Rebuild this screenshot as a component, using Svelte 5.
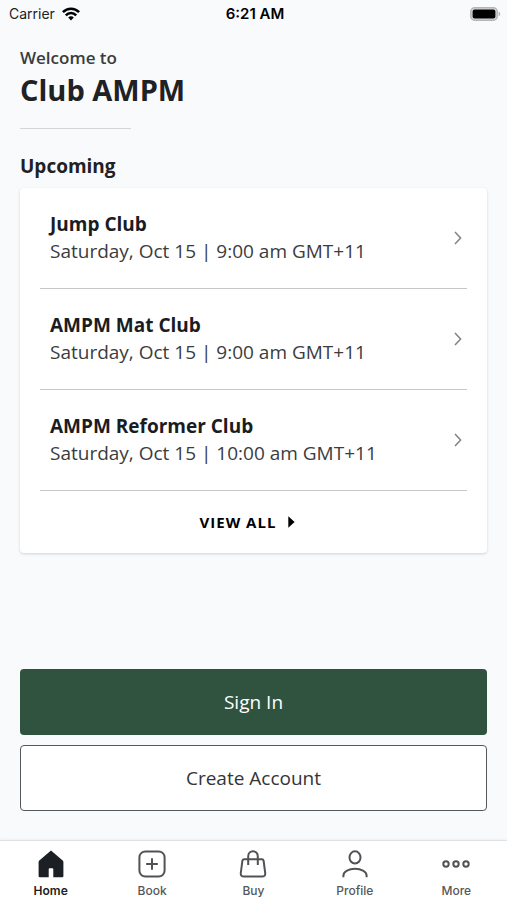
<script>
  const classes = [
    { name: 'Jump Club', time: 'Saturday, Oct 15 | 9:00 am GMT+11' },
    { name: 'AMPM Mat Club', time: 'Saturday, Oct 15 | 9:00 am GMT+11' },
    { name: 'AMPM Reformer Club', time: 'Saturday, Oct 15 | 10:00 am GMT+11' }
  ];
  const tabs = ['Home', 'Book', 'Buy', 'Profile', 'More'];
  let active = $state('Home');
</script>

<div class="app">
  <div class="status">
    <div class="carrier">
      <span>Carrier</span>
      <svg width="18" height="14" viewBox="0 0 18 14" aria-hidden="true">
        <g fill="none" stroke="#000" stroke-width="2.6">
          <path d="M0.9 5.2C5.4 0.5 12.6 0.5 17.1 5.2" />
          <path d="M3.8 8.3C6.8 5.2 11.2 5.2 14.2 8.3" />
        </g>
        <path d="M6.2 10.5C7.8 8.9 10.2 8.9 11.8 10.5L9 13.4Z" />
      </svg>
    </div>
    <span class="clock">6:21 AM</span>
    <svg class="battery" width="31" height="14" viewBox="0 0 31 14" aria-hidden="true">
      <rect x="0.8" y="0.8" width="26.4" height="12.4" rx="3.8" fill="#d8d9da" stroke="#b4b5b7" stroke-width="1.5" />
      <rect x="2.6" y="2.6" width="22.8" height="8.8" rx="2" />
      <path d="M28.6 4.8C30.8 5.4 30.8 8.6 28.6 9.2Z" fill="#b4b5b7" />
    </svg>
  </div>

  <main>
    <header>
      <p>Welcome to</p>
      <h1>Club AMPM</h1>
    </header>

    <section>
      <h2>Upcoming</h2>
      <div class="card">
        <ul>
          {#each classes as item}
            <li>
              <a href="#class">
                <span class="info">
                  <strong>{item.name}</strong>
                  <span>{item.time}</span>
                </span>
                <svg width="8" height="14" viewBox="0 0 8 14" aria-hidden="true">
                  <path d="M1 1L6.6 7L1 13" fill="none" stroke="#808284" stroke-width="1.5" />
                </svg>
              </a>
            </li>
          {/each}
        </ul>
        <button class="view-all" type="button">
          View all
          <svg width="7" height="12" viewBox="0 0 7 12" aria-hidden="true"><path d="M0.3 0.3L6.6 6L0.3 11.7Z" /></svg>
        </button>
      </div>
    </section>

    <div class="actions">
      <button class="primary" type="button">Sign In</button>
      <button class="secondary" type="button">Create Account</button>
    </div>
  </main>

  <nav>
    {#each tabs as tab}
      <button type="button" class:active={active === tab} onclick={() => (active = tab)}>
        <svg width="28" height="28" viewBox="0 0 28 28" fill="none" stroke="#505256" stroke-width="2" aria-hidden="true">
          {#if tab === 'Home'}
            <path d="M14 0.6L25.4 10.2Q26.4 11 26.4 12V26Q26.4 27.2 25.2 27.2H16.3V19.3Q16.3 18.3 15.3 18.3H12.7Q11.7 18.3 11.7 19.3V27.2H2.8Q1.6 27.2 1.6 26V12Q1.6 11 2.6 10.2Z" fill="#1c1f24" stroke="none" />
          {:else if tab === 'Book'}
            <rect x="1.4" y="1.4" width="25.2" height="25.2" rx="6" />
            <path d="M14 8.2V19.8M8.2 14H19.8" />
          {:else if tab === 'Buy'}
            <path d="M5.2 9.2H22.8Q24.3 9.2 24.6 10.7L26.2 23Q26.6 26.6 23 26.6H5Q1.4 26.6 1.8 23L3.4 10.7Q3.7 9.2 5.2 9.2Z" />
            <path d="M9.2 15V6.4C9.2 -0.4 18.8 -0.4 18.8 6.4V15" />
          {:else if tab === 'Profile'}
            <ellipse cx="14" cy="7.4" rx="5.5" ry="6.1" />
            <path d="M2.4 27.2V25.6C2.4 16.6 25.6 16.6 25.6 25.6V27.2" />
          {:else}
            <circle cx="4" cy="14" r="2.7" />
            <circle cx="14" cy="14" r="2.7" />
            <circle cx="24" cy="14" r="2.7" />
          {/if}
        </svg>
        <span>{tab}</span>
      </button>
    {/each}
  </nav>
</div>

<style>
  :global(body) {
    margin: 0;
    background: #f8fafc;
  }
  .app {
    display: flex;
    flex-direction: column;
    min-height: 100vh;
    box-sizing: border-box;
    color: #1f2124;
    font-family: 'Open Sans', 'Noto Sans', sans-serif;
  }
  p, h1, h2, ul {
    margin: 0;
    padding: 0;
  }
  button {
    font-family: inherit;
    cursor: pointer;
  }
  .status {
    display: grid;
    grid-template-columns: 1fr auto 1fr;
    align-items: center;
    height: 27px;
    padding: 0 6px 0 9px;
    font: 14px Inter, sans-serif;
  }
  .carrier {
    display: flex;
    align-items: center;
    gap: 7px;
  }
  .clock {
    color: #000;
    font-size: 15px;
    font-weight: 600;
  }
  .battery {
    justify-self: end;
  }
  main {
    display: flex;
    flex: 1;
    flex-direction: column;
    padding: 19px 20px 29px;
  }
  header p {
    font-size: 17px;
    font-weight: 600;
    line-height: 24px;
    color: #3a3c3e;
  }
  h1 {
    font-size: 29px;
    font-weight: 700;
    line-height: 40px;
  }
  header::after {
    content: '';
    display: block;
    width: 111px;
    height: 1px;
    margin-top: 18px;
    background: #d3d5d7;
  }
  h2 {
    margin: 23px 0 8px;
    font-size: 19px;
    font-weight: 700;
    line-height: 28px;
  }
  .card {
    padding: 0 20px;
    border-radius: 4px;
    background: #fff;
    box-shadow: 0 1px 3px rgba(0, 0, 0, 0.16);
  }
  ul {
    list-style: none;
  }
  li {
    border-bottom: 1px solid #c6c7c8;
  }
  li a {
    display: flex;
    align-items: center;
    justify-content: space-between;
    height: 100px;
    padding: 0 5px 0 10px;
    color: #3a3c3e;
    font-size: 19px;
    line-height: 27px;
    text-decoration: none;
  }
  .info {
    display: flex;
    flex-direction: column;
  }
  strong {
    color: #1a1c1f;
    font-weight: 700;
  }
  .view-all {
    display: flex;
    align-items: center;
    justify-content: center;
    gap: 12px;
    width: 100%;
    height: 62px;
    padding: 0 12px 0 0;
    border: 0;
    background: none;
    color: #000;
    font-size: 15px;
    font-weight: 700;
    letter-spacing: 1px;
    text-transform: uppercase;
  }
  .actions {
    display: flex;
    flex-direction: column;
    gap: 10px;
    margin-top: auto;
    padding-top: 24px;
  }
  .actions button {
    height: 66px;
    border-radius: 4px;
    font-size: 19px;
  }
  .primary {
    border: 0;
    background: #30533f;
    color: #fff;
  }
  .secondary {
    border: 1px solid #55575a;
    background: #fff;
    color: #333538;
  }
  nav {
    display: grid;
    grid-template-columns: repeat(5, 1fr);
    height: 59px;
    border-top: 1px solid #e0e2e4;
    background: #fff;
    box-shadow: 0 -1px 2px rgba(0, 0, 0, 0.04);
  }
  nav button {
    display: flex;
    flex-direction: column;
    align-items: center;
    gap: 5px;
    padding: 9px 0 0;
    border: 0;
    background: none;
    color: #55575b;
    font: 500 12px/16px Inter, sans-serif;
  }
  nav .active {
    color: #1c1f24;
    font-weight: 600;
  }
</style>
